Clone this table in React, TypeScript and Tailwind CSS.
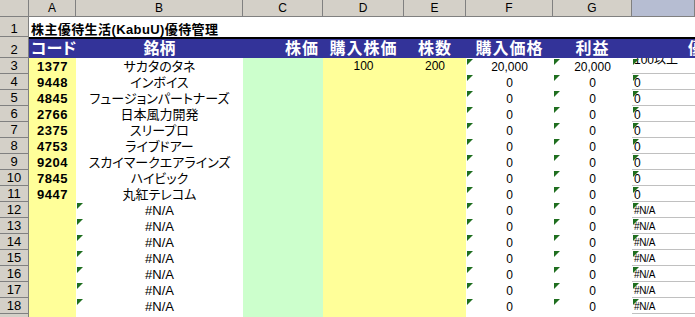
import React from "react";

const JP = "font-['Liberation_Sans','Noto_Sans_CJK_JP',sans-serif] [font-feature-settings:'palt']";

const names: [string, string][] = [
  ["1377", "サカタのタネ"],
  ["9448", "インボイス"],
  ["4845", "フュージョンパートナーズ"],
  ["2766", "日本風力開発"],
  ["2375", "スリープロ"],
  ["4753", "ライブドアー"],
  ["9204", "スカイマークエアラインズ"],
  ["7845", "ハイビック"],
  ["9447", "丸紅テレコム"],
];

function Tri() {
  return (
    <svg width="6" height="6" className="absolute left-[1px] top-[1px]" viewBox="0 0 6 6">
      <polygon points="0,0 6,0 0,6" fill="#1f6e1f" />
    </svg>
  );
}

const cols = "grid grid-cols-[29px_47px_167px_80px_81px_62px_87px_79px_63px]";

function RowHead({ n, h, align = "center" }: { n: number | string; h: string; align?: string }) {
  return (
    <div
      className={`${h} bg-[#d4d0c8] border-r border-b border-[#808080] flex justify-center ${align === "end" ? "items-end pb-[1px]" : "items-center"} text-[13px] text-black font-['Liberation_Sans',sans-serif] leading-none`}
    >
      {n}
    </div>
  );
}

export default function App() {
  const rows = [];
  for (let r = 3; r <= 19; r++) {
    const i = r - 3;
    const d = names[i];
    const isNA = r >= 12 && r <= 18;
    const blank = r === 19;
    rows.push(
      <div key={r} className={`${cols} h-[16px]`}>
        <RowHead n={r} h="h-[16px]" />
        <div className="bg-[#ffff99] flex items-center justify-center text-[13px] font-bold tracking-[0.5px] text-black font-['Liberation_Sans',sans-serif] leading-none">
          {d ? d[0] : ""}
        </div>
        <div className={`relative bg-white flex items-center justify-center text-[13px] text-black leading-none ${JP}`}>
          {isNA && <Tri />}
          {d ? d[1] : isNA ? "#N/A" : ""}
        </div>
        <div className="bg-[#ccffcc]" />
        <div className="bg-[#ffff99] flex items-center justify-center text-[12px] text-black font-['Liberation_Sans',sans-serif] leading-none">
          {r === 3 ? "100" : ""}
        </div>
        <div className="bg-[#ffff99] flex items-center justify-center text-[12px] text-black font-['Liberation_Sans',sans-serif] leading-none">
          {r === 3 ? "200" : ""}
        </div>
        <div className="relative bg-white flex items-center justify-center text-[12px] text-black font-['Liberation_Sans',sans-serif] leading-none pt-[2px]">
          {!blank && <Tri />}
          {blank ? "" : r === 3 ? "20,000" : "0"}
        </div>
        <div className="relative bg-white flex items-center justify-center text-[12px] text-black font-['Liberation_Sans',sans-serif] leading-none pt-[2px]">
          {!blank && <Tri />}
          {blank ? "" : r === 3 ? "20,000" : "0"}
        </div>
        <div className={`relative bg-white border-b border-[#c0c0c0] flex ${r === 3 ? "items-start" : "items-center"} overflow-hidden pl-[2px] text-black leading-none ${JP}`}>
          {!blank && <Tri />}
          {r === 3 ? (
            <span className="text-[12px] -mt-[4px]">100以上</span>
          ) : r <= 11 ? (
            <span className="text-[12px] pt-[3px]">0</span>
          ) : isNA ? (
            <span className="text-[10px] pt-[3px] tracking-[-0.3px]">#N/A</span>
          ) : null}
        </div>
      </div>
    );
  }

  const colHead = ["A", "B", "C", "D", "E", "F", "G", ""];

  return (
    <div className="w-[695px] h-[317px] overflow-hidden bg-white">
      {/* column header */}
      <div className={`${cols} h-[17px]`}>
        <div className="bg-[#d4d0c8] border-r border-b border-[#808080]" />
        {colHead.map((c, i) => (
          <div
            key={i}
            className={`${i === 7 ? "bg-[#b6bdd2]" : "bg-[#d4d0c8]"} border-r border-b border-[#808080] flex items-center justify-center text-[12px] text-black font-['Liberation_Sans',sans-serif] leading-none`}
          >
            {c}
          </div>
        ))}
      </div>
      {/* row 1 */}
      <div className={`${cols} h-[20px]`}>
        <RowHead n={1} h="h-[20px]" align="end" />
        <div className={`col-span-8 bg-white flex items-end pb-[1px] pl-[2px] text-[13px] font-bold text-black whitespace-nowrap leading-none tracking-[0.4px] ${JP}`}>
          株主優待生活(KabuU)優待管理
        </div>
      </div>
      {/* row 2 */}
      <div className={`${cols} h-[21px]`}>
        <RowHead n={2} h="h-[21px]" align="end" />
        <div className={`col-span-8 grid grid-cols-[47px_167px_80px_81px_62px_87px_79px_63px] bg-[#333399] border-t-2 border-black text-white font-bold text-[16px] leading-none ${JP}`}>
          <div className="flex items-center pl-[2px] whitespace-nowrap">コード</div>
          <div className="flex items-center justify-center">銘柄</div>
          <div className="flex items-center justify-end pr-[4px] tracking-[1px]">株価</div>
          <div className="flex items-center justify-center tracking-[1px]">購入株価</div>
          <div className="flex items-center justify-center tracking-[1px]">株数</div>
          <div className="flex items-center justify-center tracking-[1px]">購入価格</div>
          <div className="flex items-center justify-center tracking-[1px]">利益</div>
          <div className="flex items-center pl-[56px] overflow-hidden whitespace-nowrap">優待</div>
        </div>
      </div>
      {rows}
    </div>
  );
}
